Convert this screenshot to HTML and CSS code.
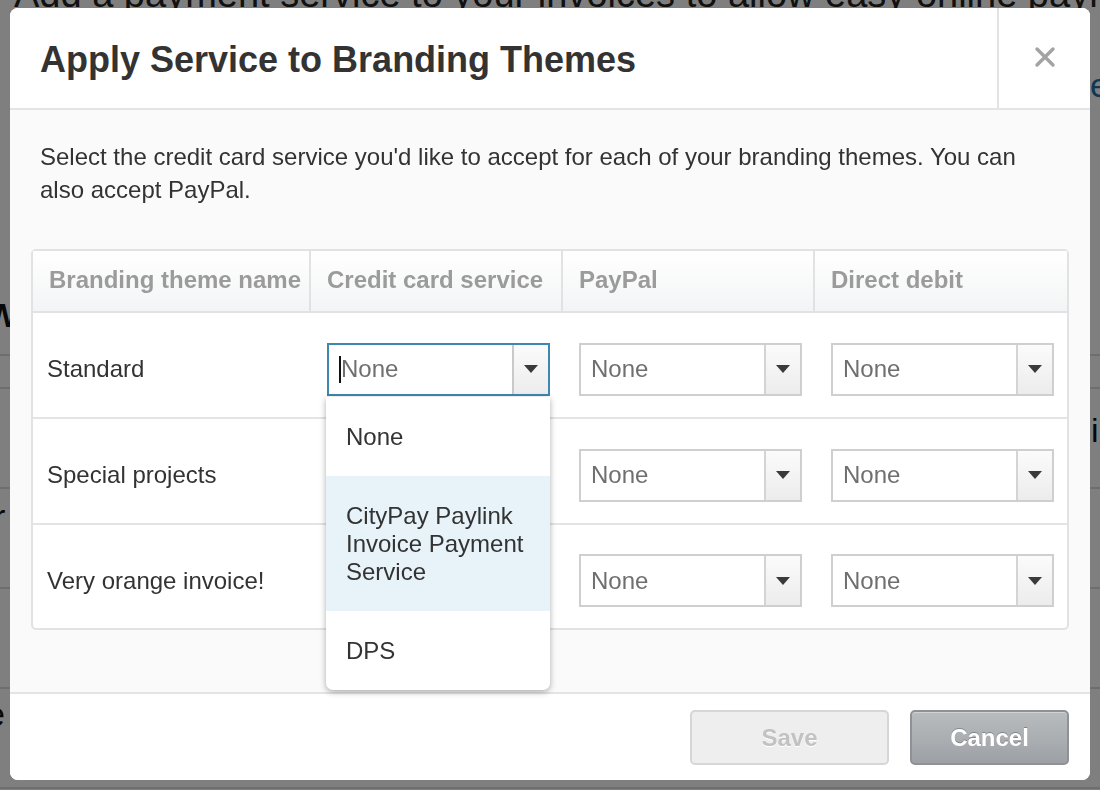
FILE: index.html
```html
<!DOCTYPE html>
<html lang="en">
<head>
<meta charset="utf-8">
<title>Apply Service to Branding Themes</title>
<link rel="stylesheet" href="styles.css">
</head>
<body>
<div class="page">
  <h1 class="page-title">Add a payment service to your invoices to allow easy online payments</h1>
  <div class="page-link">e</div>
  <div class="page-rows">
    <div class="page-row tall"><span class="page-w">W</span></div>
    <div class="page-row"></div>
    <div class="page-row mid"><span class="page-i">i</span></div>
    <div class="page-row mid"><span class="page-r">r</span></div>
    <div class="page-row mid"></div>
    <div class="page-row mid"><span class="page-e">e</span></div>
  </div>
</div>
<div class="backdrop"></div>

<div class="modal" role="dialog">
  <div class="modal-header">
    <h2 class="modal-title">Apply Service to Branding Themes</h2>
    <button class="close" aria-label="Close">
      <svg width="22" height="22" viewBox="0 0 22 22"><path d="M3 3 L19 19 M19 3 L3 19" stroke="#a3a3a3" stroke-width="3.4" stroke-linecap="round"/></svg>
    </button>
  </div>
  <div class="modal-body">
    <p class="intro">Select the credit card service you'd like to accept for each of your branding themes. You can also accept PayPal.</p>
    <div class="table-wrap">
      <table class="themes">
        <colgroup>
          <col class="c1"><col class="c2"><col class="c3"><col class="c4">
        </colgroup>
        <thead>
          <tr>
            <th>Branding theme name</th>
            <th>Credit card service</th>
            <th>PayPal</th>
            <th>Direct debit</th>
          </tr>
        </thead>
        <tbody>
          <tr>
            <td>Standard</td>
            <td class="sel-cell">
              <div class="select focused"><span class="value"><span class="caret"></span>None</span><span class="arrow"><span class="tri"></span></span></div>
              <ul class="dropdown">
                <li>None</li>
                <li class="active">CityPay Paylink Invoice Payment Service</li>
                <li>DPS</li>
              </ul>
            </td>
            <td><div class="select"><span class="value">None</span><span class="arrow"><span class="tri"></span></span></div></td>
            <td><div class="select"><span class="value">None</span><span class="arrow"><span class="tri"></span></span></div></td>
          </tr>
          <tr>
            <td>Special projects</td>
            <td></td>
            <td><div class="select"><span class="value">None</span><span class="arrow"><span class="tri"></span></span></div></td>
            <td><div class="select"><span class="value">None</span><span class="arrow"><span class="tri"></span></span></div></td>
          </tr>
          <tr>
            <td>Very orange invoice!</td>
            <td></td>
            <td><div class="select"><span class="value">None</span><span class="arrow"><span class="tri"></span></span></div></td>
            <td><div class="select"><span class="value">None</span><span class="arrow"><span class="tri"></span></span></div></td>
          </tr>
        </tbody>
      </table>
    </div>
  </div>
  <div class="modal-footer">
    <button class="btn btn-save" disabled>Save</button>
    <button class="btn btn-cancel">Cancel</button>
  </div>
</div>
</body>
</html>
```
FILE: styles.css
```css
* { box-sizing: border-box; }
html, body { margin: 0; padding: 0; }
body {
  width: 1100px;
  height: 790px;
  overflow: hidden;
  font-family: "Liberation Sans", Arial, sans-serif;
  background: #fff;
  color: #333;
}

/* background page */
.page { position: relative; height: 790px; overflow: hidden; }
.page-title {
  margin: -27px 0 0 14px;
  font-size: 38px;
  font-weight: normal;
  color: #222;
  white-space: nowrap;
}
.page-link {
  margin: 52px 0 0 1090px;
  font-size: 34px;
  line-height: 34px;
  color: #1e6fa6;
}
.page-rows { margin-top: 184px; }
.page-row {
  height: 33px;
  border-bottom: 2px solid #ddd;
  position: relative;
  font-size: 34px;
}
.page-row.tall { height: 70px; }
.page-row.mid { height: 100px; }
.page-w { position: absolute; left: -14px; top: 10px; font-weight: bold; color: #111; }
.page-i { position: absolute; left: 1091px; top: 22px; color: #111; }
.page-r { position: absolute; left: -6px; top: 8px; color: #111; }
.page-e { position: absolute; left: -14px; top: 6px; color: #111; }

.backdrop {
  position: fixed;
  inset: 0;
  background: rgba(0, 0, 0, 0.5);
}

/* modal */
.modal {
  position: fixed;
  left: 10px;
  top: 8px;
  width: 1080px;
  height: 772px;
  background: #fafafa;
  border-radius: 8px;
  overflow: hidden;
  display: flex;
  flex-direction: column;
}
.modal-header {
  height: 102px;
  flex: none;
  display: flex;
  background: #fff;
  border-bottom: 2px solid #e4e4e4;
}
.modal-title {
  flex: 1;
  margin: 0;
  padding: 4px 0 0 30px;
  display: flex;
  align-items: center;
  font-size: 36px;
  font-weight: bold;
  color: #333;
}
.close {
  width: 93px;
  border: 0;
  border-left: 2px solid #e4e4e4;
  background: #fff;
  padding: 0 0 2px 0;
  display: flex;
  align-items: center;
  justify-content: center;
}

.modal-body {
  flex: 1;
  padding: 30px 21px 0 21px;
}
.intro {
  margin: 0 0 43px 9px;
  font-size: 24px;
  line-height: 33px;
  color: #333;
  max-width: 1010px;
}

.table-wrap {
  border: 2px solid #e2e2e2;
  border-radius: 5px;
  background: #fff;
}
.themes {
  width: 100%;
  border-collapse: separate;
  border-spacing: 0;
  table-layout: fixed;
}
col.c1 { width: 278px; }
col.c2 { width: 252px; }
col.c3 { width: 252px; }
col.c4 { width: auto; }
.themes th {
  height: 62px;
  padding: 0 16px 2px 16px;
  text-align: left;
  font-size: 24px;
  font-weight: bold;
  color: #9b9b9b;
  white-space: nowrap;
  overflow: hidden;
  background: linear-gradient(#ffffff, #f3f4f5);
  border-bottom: 2px solid #e2e2e2;
  border-right: 2px solid #e2e2e2;
}
.themes th:last-child { border-right: 0; }
.themes td {
  height: 106px;
  padding: 8px 16px 0 14px;
  vertical-align: middle;
  font-size: 24px;
  color: #333;
  border-bottom: 2px solid #e4e4e4;
}
.themes tr:last-child td { border-bottom: 0; height: 103px; }
.themes td + td { padding-left: 16px; }
.sel-cell { position: relative; }

.select {
  width: 223px;
  height: 53px;
  display: flex;
  border: 2px solid #cfcfcf;
  background: #fff;
}
.select.focused { border-color: #3d87b1; }
.select .value {
  flex: 1;
  display: flex;
  align-items: center;
  padding-left: 10px;
  font-size: 24px;
  color: #6f6f6f;
}
.caret {
  width: 2px;
  height: 27px;
  background: #111;
}
.select .arrow {
  width: 36px;
  flex: none;
  border-left: 2px solid #d4d4d4;
  background: linear-gradient(#fbfbfb, #ececec);
  display: flex;
  align-items: center;
  justify-content: center;
}
.select.focused .arrow { border-left-color: #c9c9c9; }
.tri {
  width: 0;
  height: 0;
  border-left: 7px solid transparent;
  border-right: 7px solid transparent;
  border-top: 8px solid #3a3a3a;
}

.dropdown {
  position: absolute;
  left: 15px;
  top: 84px;
  width: 224px;
  margin: 0;
  padding: 0;
  list-style: none;
  background: #fff;
  border-radius: 0 0 7px 7px;
  box-shadow: 0 2px 6px rgba(0, 0, 0, 0.32);
  z-index: 5;
}
.dropdown li {
  padding: 26px 20px 25px 20px;
  font-size: 24px;
  line-height: 28px;
  color: #333;
}
.dropdown li.active { background: #e7f3f8; }

.modal-footer {
  height: 88px;
  flex: none;
  background: #fff;
  border-top: 2px solid #e4e4e4;
  display: flex;
  align-items: center;
  justify-content: flex-end;
  gap: 21px;
  padding: 1px 21px 0 0;
}
.btn {
  height: 55px;
  border-radius: 5px;
  font-family: "Liberation Sans", Arial, sans-serif;
  font-size: 24px;
  font-weight: bold;
}
.btn-save {
  width: 199px;
  background: #eeeeee;
  border: 2px solid #d6d6d6;
  color: #c2c2c2;
  text-shadow: 0 1px 0 #fff;
}
.btn-cancel {
  width: 159px;
  background: linear-gradient(#b9bcbf, #9da1a5);
  border: 2px solid #8e9296;
  box-shadow: inset 0 1px 0 rgba(255,255,255,0.35);
  color: #fff;
  text-shadow: 0 -1px 0 rgba(0,0,0,0.25);
}
```
